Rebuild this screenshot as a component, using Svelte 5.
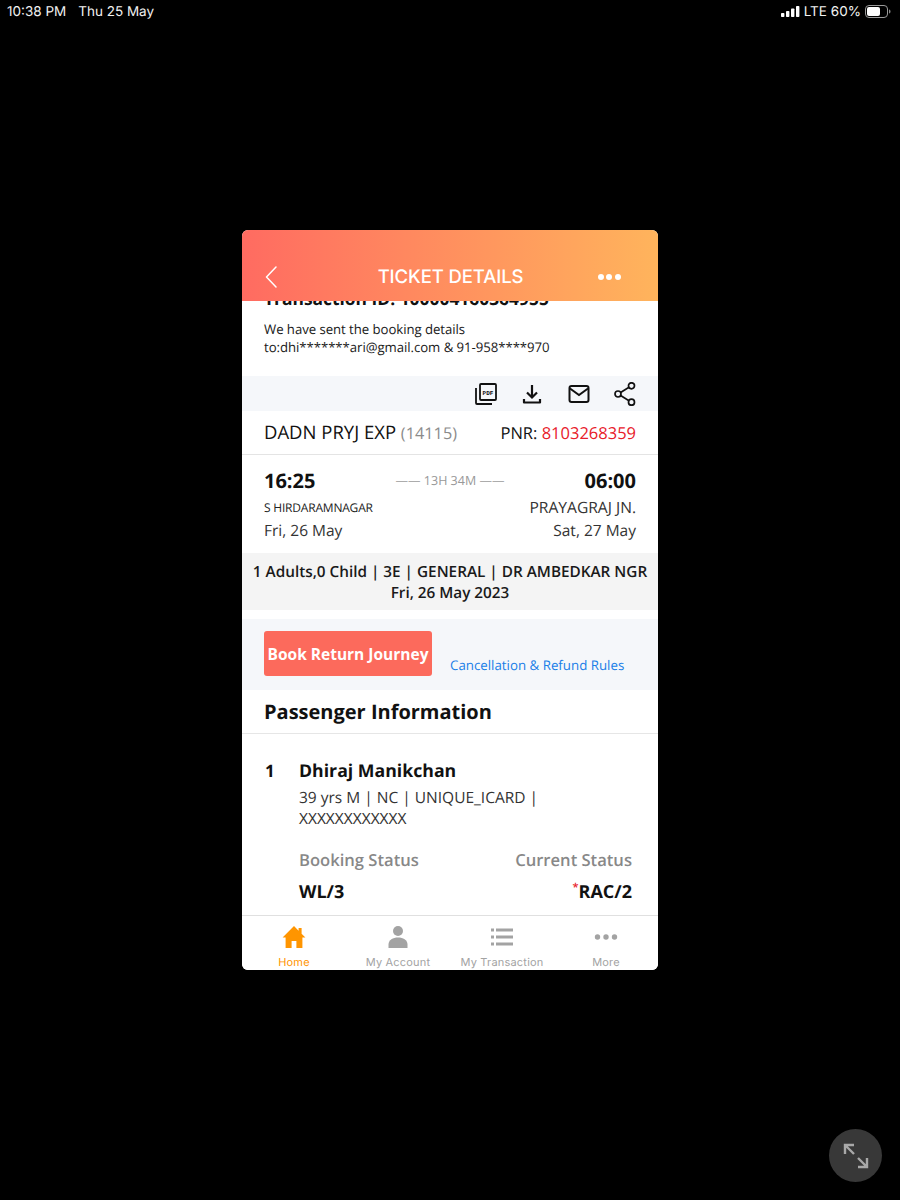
<script>
  const tabs = [
    { label: 'Home', active: true, icon: 'home' },
    { label: 'My Account', icon: 'user' },
    { label: 'My Transaction', icon: 'list' },
    { label: 'More', icon: 'more' }
  ];
</script>

<div class="screen">
  <div class="status">
    <div class="status-left"><span>10:38 PM</span><span>Thu 25 May</span></div>
    <div class="status-right">
      <svg width="19" height="11" viewBox="0 0 19 11" fill="#fff"><rect x="0" y="7" width="3.4" height="4" rx=".8"/><rect x="5" y="5" width="3.4" height="6" rx=".8"/><rect x="10" y="2.5" width="3.4" height="8.5" rx=".8"/><rect x="15" y="0" width="3.4" height="11" rx=".8"/></svg>
      <span>LTE</span><span>60%</span>
      <svg width="26" height="13" viewBox="0 0 26 13"><rect x=".5" y=".5" width="22" height="12" rx="3.5" fill="none" stroke="#9a9a9a"/><rect x="2" y="2" width="13" height="9" rx="2" fill="#fff"/><path d="M24 4.5c1 .3 1.5 1 1.5 2s-.5 1.7-1.5 2z" fill="#8a8a8a"/></svg>
    </div>
  </div>

  <div class="card">
    <header class="head">
      <svg class="back" width="12" height="22" viewBox="0 0 12 22" fill="none" stroke="#fff" stroke-width="1.5" stroke-linecap="round" stroke-linejoin="round"><path d="M11 1 1.5 11 11 21"/></svg>
      <h1>TICKET DETAILS</h1>
      <div class="dots"><i></i><i></i><i></i></div>
    </header>

    <main class="content">
      <div class="txn"><div>Transaction ID: 100004160364955</div></div>
      <p class="sent">We have sent the booking details<br />to:dhi*******ari@gmail.com &amp; 91-958****970</p>

      <div class="tools">
        <svg width="24" height="24" viewBox="0 0 24 24" fill="none" stroke="#111" stroke-width="1.8"><rect x="6" y="2" width="16" height="16" rx="1"/><path d="M2 6v15a1 1 0 0 0 1 1h15"/><text x="14" y="12.5" text-anchor="middle" class="pdf">PDF</text></svg>
        <svg width="24" height="24" viewBox="0 0 24 24" fill="none" stroke="#111" stroke-width="2.2"><path d="M12 3v12M7 10.5l5 5 5-5"/><path d="M4 17v3.5h16V17" stroke-linejoin="round"/></svg>
        <svg width="24" height="24" viewBox="0 0 24 24" fill="none" stroke="#111" stroke-width="2"><rect x="2.5" y="4" width="19" height="16" rx="2"/><path d="M3 6.5l9 6.5 9-6.5"/></svg>
        <svg width="24" height="24" viewBox="0 0 24 24" fill="none" stroke="#111" stroke-width="1.7"><circle cx="5" cy="12" r="3"/><circle cx="18.5" cy="3.8" r="3"/><circle cx="18.5" cy="20.2" r="3"/><path d="M7.6 10.4 16 5.3M7.6 13.6l8.4 5.1"/></svg>
      </div>

      <div class="train">
        <div class="train-name">DADN PRYJ EXP <span>(14115)</span></div>
        <div class="pnr">PNR: <span>8103268359</span></div>
      </div>

      <div class="times">
        <div class="row big"><strong>16:25</strong><span class="dur">—— 13H 34M ——</span><strong>06:00</strong></div>
        <div class="row stations"><span class="small">S HIRDARAMNAGAR</span><span>PRAYAGRAJ JN.</span></div>
        <div class="row dates"><span>Fri, 26 May</span><span>Sat, 27 May</span></div>
      </div>

      <div class="summary">1 Adults,0 Child | 3E | GENERAL | DR AMBEDKAR NGR<br />Fri, 26 May 2023</div>

      <div class="actions">
        <button type="button">Book Return Journey</button>
        <span class="rules">Cancellation &amp; Refund Rules</span>
      </div>

      <h2>Passenger Information</h2>

      <section class="passenger">
        <div class="num">1</div>
        <div class="info">
          <div class="name">Dhiraj Manikchan</div>
          <div class="meta">39 yrs M | NC | UNIQUE_ICARD |<br />XXXXXXXXXXXX</div>
          <div class="status-row label"><span>Booking Status</span><span>Current Status</span></div>
          <div class="status-row value"><span>WL/3</span><span><sup>*</sup>RAC/2</span></div>
        </div>
      </section>
    </main>

    <nav class="tabs">
      {#each tabs as tab}
        <div class="tab" class:active={tab.active}>
          {#if tab.icon === 'home'}
            <svg width="24" height="24" viewBox="0 0 24 24" fill="#ff9500"><path d="M12 1 0.6 12.6h3V23h6v-7h4.8v7h6V12.6h3L19.6 8.8V3h-3v2.8z"/></svg>
          {:else if tab.icon === 'user'}
            <svg width="24" height="24" viewBox="0 0 24 24" fill="#a3a3a3"><circle cx="12" cy="6" r="5"/><path d="M2.5 23v-3.5C2.5 15 7 12.5 12 12.5s9.500 2.500 9.500 7V23z"/></svg>
          {:else if tab.icon === 'list'}
            <svg width="24" height="24" viewBox="0 0 24 24" fill="#a3a3a3"><rect x="1" y="3.500" width="3" height="3"/><rect x="6" y="3.500" width="17" height="3"/><rect x="1" y="10.500" width="3" height="3"/><rect x="6" y="10.500" width="17" height="3"/><rect x="1" y="17.500" width="3" height="3"/><rect x="6" y="17.500" width="17" height="3"/></svg>
          {:else}
            <svg width="24" height="24" viewBox="0 0 24 24" fill="#a3a3a3"><circle cx="3.500" cy="12" r="2.700"/><circle cx="12" cy="12" r="2.700"/><circle cx="20.500" cy="12" r="2.700"/></svg>
          {/if}
          <span>{tab.label}</span>
        </div>
      {/each}
    </nav>
  </div>

  <div class="expand">
    <svg width="28" height="28" viewBox="0 0 28 28" fill="none" stroke="#a8a8a8" stroke-width="2.400"><path d="M3 12V3h9M3 3l9 9M25 16v9h-9M25 25l-9-9"/></svg>
  </div>
</div>

<style>
  :global(body) { margin: 0; background: #000; }
  .screen {
    position: relative;
    width: 900px;
    height: 1200px;
    background: #000;
    overflow: hidden;
    font-family: "Open Sans", sans-serif;
    color: #111;
    text-rendering: geometricPrecision;
  }
  .status {
    height: 22px;
    box-sizing: border-box;
    padding: 1px 9px 0 7px;
    display: flex;
    justify-content: space-between;
    align-items: center;
    color: #f2f2f2;
    font-family: Inter, "Liberation Sans", sans-serif;
    font-size: 13.500px;
  }
  .status-left { display: flex; gap: 12px; }
  .status-right { display: flex; align-items: center; gap: 4px; }
  .card {
    width: 416px;
    height: 740px;
    margin: 208px 0 0 242px;
    background: #fff;
    border-radius: 6px;
    overflow: hidden;
    display: flex;
    flex-direction: column;
  }
  .head {
    flex: none;
    height: 71px;
    box-sizing: border-box;
    padding: 23px 37px 0 23px;
    display: flex;
    align-items: center;
    justify-content: space-between;
    background: linear-gradient(90deg, #ff6b61, #ffb45c);
    color: #fff;
  }
  .head h1 {
    margin: 0;
    font: 500 18.500px Inter, "Liberation Sans", sans-serif;
    letter-spacing: -.1px;
    padding-left: 26px;
  }
  .back { flex: none; }
  .dots { display: flex; gap: 2.500px; }
  .dots i { width: 6px; height: 6px; border-radius: 50%; background: #fff; }
  .content { flex: 1; min-height: 0; overflow: hidden; }
  .txn { height: 8px; overflow: hidden; padding-left: 22px; }
  .txn div { margin-top: -13px; font-size: 17.400px; line-height: 22px; font-weight: 700; color: #111; white-space: nowrap; }
  .sent { margin: 11px 22px 0; font-size: 13.200px; line-height: 18px; height: 56px; color: #1a1a1a; letter-spacing: -.05px; }
  .tools {
    height: 35px;
    background: #f5f7fa;
    display: flex;
    justify-content: flex-end;
    align-items: center;
    gap: 22.500px;
    padding-right: 21px;
  }
  .tools svg { flex: none; }
  .pdf { font: 700 6px "Liberation Mono", monospace; fill: #111; stroke: none; }
  .train {
    height: 44px;
    box-sizing: border-box;
    border-bottom: 1px solid #e4e4e4;
    padding: 0 22px 0 22px;
    display: flex;
    justify-content: space-between;
    align-items: center;
  }
  .train-name { font-size: 18.500px; }
  .train-name span { font-size: 16.300px; color: #8b8b8b; }
  .pnr { font-size: 16.500px; }
  .pnr span { color: #e8202a; }
  .times { height: 98px; box-sizing: border-box; padding: 12px 22px 0; }
  .row { display: flex; justify-content: space-between; align-items: center; }
  .big { height: 26px; font-size: 20px; }
  .big strong { font-weight: 700; color: #111; }
  .dur { font-size: 12.500px; color: #999; }
  .stations { height: 26px; margin-top: 1px; font-size: 15.600px; color: #333; }
  .small { font-size: 12px; letter-spacing: -.2px; color: #222; }
  .dates { height: 20px; font-size: 15.500px; color: #333; }
  .summary {
    height: 57px;
    background: #f4f4f4;
    box-sizing: border-box;
    padding-top: 9px;
    text-align: center;
    font-size: 15.300px;
    font-weight: 600;
    line-height: 21px;
    color: #1a1a1a;
    white-space: nowrap;
  }
  .actions {
    height: 71px;
    margin-top: 9px;
    background: #f5f7fa;
    box-sizing: border-box;
    padding: 12px 0 0 22px;
    display: flex;
    align-items: flex-start;
    gap: 18px;
  }
  button {
    width: 168px;
    height: 45px;
    padding: 0;
    border: 0;
    border-radius: 3px;
    background: #fc6a5c;
    color: #fff;
    font: 700 15.500px "Open Sans", sans-serif;
    white-space: nowrap;
  }
  .rules { margin-top: 25px; font-size: 13.300px; line-height: 18px; color: #1a7fe8; }
  h2 {
    margin: 0;
    height: 44px;
    box-sizing: border-box;
    padding: 8px 0 0 22px;
    border-bottom: 1px solid #e6e6e6;
    font-size: 20px;
    line-height: 28px;
    font-weight: 700;
    color: #111;
  }
  .passenger { display: flex; padding: 24px 26px 0 23px; }
  .num { width: 34px; flex: none; font-size: 17px; font-weight: 700; line-height: 26px; }
  .info { flex: 1; }
  .name { font-size: 17.700px; font-weight: 700; line-height: 26px; color: #111; }
  .meta { margin-top: 3px; font-size: 15.500px; line-height: 20.500px; color: #333; }
  .status-row { display: flex; justify-content: space-between; }
  .label { margin-top: 21px; font-size: 16.600px; font-weight: 600; line-height: 22px; color: #888; }
  .value { margin-top: 9px; font-size: 18px; font-weight: 700; line-height: 24px; color: #111; }
  sup { color: #e8202a; font-size: 11px; line-height: 0; font-weight: 600; }
  .tabs {
    flex: none;
    height: 55px;
    box-sizing: border-box;
    border-top: 1px solid #e0e0e0;
    display: grid;
    grid-template-columns: repeat(4, 1fr);
    background: #fff;
  }
  .tab {
    display: flex;
    flex-direction: column;
    align-items: center;
    padding-top: 9px;
    font: 11px Inter, "Liberation Sans", sans-serif;
    letter-spacing: .2px;
    color: #a3a3a3;
    white-space: nowrap;
  }
  .tab svg { flex: none; }
  .tab span { margin-top: 6px; line-height: 14px; }
  .tab.active { color: #ff9500; }
  .expand {
    position: absolute;
    left: 829px;
    top: 1129px;
    width: 53px;
    height: 53px;
    border-radius: 50%;
    background: #383838;
    display: flex;
    align-items: center;
    justify-content: center;
  }
</style>
